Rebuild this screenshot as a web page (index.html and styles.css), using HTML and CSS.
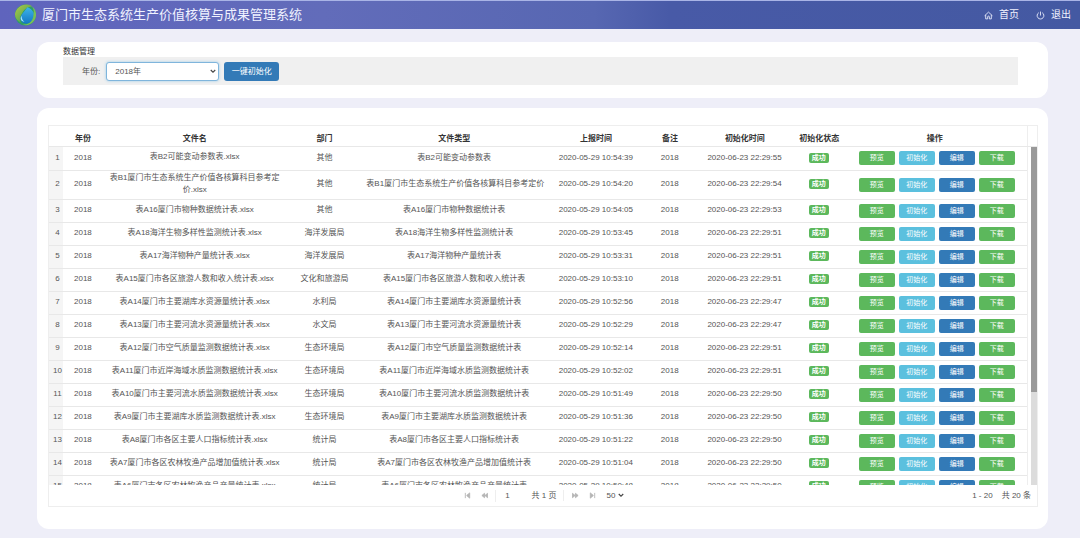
FILE: index.html
```html
<!DOCTYPE html>
<html lang="zh-CN">
<head>
<meta charset="utf-8">
<title>厦门市生态系统生产价值核算与成果管理系统</title>
<link rel="stylesheet" href="styles.css">
</head>
<body>
<header class="topbar">
  <svg class="logo" viewBox="0 0 24 24" aria-hidden="true">
    <defs>
      <linearGradient id="leaf" x1="0" y1="0" x2="1" y2="1"><stop offset="0" stop-color="#b5c84a"/><stop offset="1" stop-color="#2f9a4e"/></linearGradient>
      <linearGradient id="sea" x1="0" y1="0" x2="0" y2="1"><stop offset="0" stop-color="#3db4ea"/><stop offset="1" stop-color="#1277c4"/></linearGradient>
    </defs>
    <circle cx="12" cy="12" r="11" fill="#2d9c6a"/>
    <path d="M1 11C2 5 7 1 13 1c3 0 5 1 6 2-6 0-9 4-11 8-2 3-2 6-1 9C3 18 1 15 1 11z" fill="url(#leaf)"/>
    <path d="M14 4c5 2 8 6 7 11-1 6-9 8-13 4-4-5 2-9 6-15z" fill="url(#sea)"/>
    <path d="M8 13c-2 2-1 6 3 6-2-1-3-3-3-6z" fill="#a9e6f7"/>
    <path d="M19 3c5 4 5 11 2 15-3 4-8 6-12 4 6 0 10-3 11-8s1-8-1-11z" fill="#78bf58"/>
  </svg>
  <h1 class="brand">厦门市生态系统生产价值核算与成果管理系统</h1>
  <nav class="topnav">
    <a href="#home"><svg viewBox="0 0 16 16" aria-hidden="true"><path d="M1 8.500 8 2l7 6.500M3 7v7h3.500v-3.500a1.500 1.500 0 0 1 3 0V14H13V7"/></svg>首页</a>
    <a href="#logout"><svg viewBox="0 0 16 16" aria-hidden="true"><path d="M5 3a6 6 0 1 0 6 0M8 1v7"/></svg>退出</a>
  </nav>
</header>
<main class="page">
  <section class="card filter-card">
    <h2 class="section-title">数据管理</h2>
    <form class="filter-bar">
      <label for="year">年份:</label>
      <span class="select-wrap">
        <select id="year" class="year-select"><option>2018年</option></select>
        <svg class="caret" viewBox="0 0 8 6" aria-hidden="true"><path d="M1 1l3 3 3-3"/></svg>
      </span>
      <button type="button" class="btn btn-main">一键初始化</button>
    </form>
  </section>
  <section class="card grid-card">
    <div class="grid">
      <div class="grid-head">
        <table class="data-table">
          <colgroup class="cols"></colgroup>
          <thead><tr><th></th><th>年份</th><th>文件名</th><th>部门</th><th>文件类型</th><th>上报时间</th><th>备注</th><th>初始化时间</th><th>初始化状态</th><th>操作</th></tr></thead>
        </table>
      </div>
      <div class="grid-body">
        <div class="grid-rows">
          <table class="data-table">
            <colgroup class="cols"></colgroup>
            <tbody id="rows"></tbody>
          </table>
        </div>
        <div class="scroll-track"><div class="scroll-thumb" id="thumb"></div></div>
      </div>
      <footer class="pager">
        <div class="pager-nav">
          <button type="button" aria-label="首页"><svg viewBox="0 0 8 8"><path d="M1.500 1v6M6.500 1 3 4l3.500 3z"/></svg></button>
          <button type="button" aria-label="上一页"><svg viewBox="0 0 8 8"><path d="M4 1.500 1 4l3 2.500zM7.500 1.500l-3 2.500 3 2.500z"/></svg></button>
          <input class="page-input" type="text" value="1" aria-label="页码">
          <span class="page-total">共 1 页</span>
          <button type="button" aria-label="下一页"><svg viewBox="0 0 8 8"><path d="M.5 1.500l3 2.500-3 2.500zM4 1.500 7 4 4 6.500z"/></svg></button>
          <button type="button" aria-label="末页"><svg viewBox="0 0 8 8"><path d="M6.500 1v6M1.500 1 5 4 1.500 7z"/></svg></button>
          <span class="select-wrap">
            <select class="size-select" aria-label="每页条数"><option>50</option></select>
            <svg class="caret" viewBox="0 0 8 6" aria-hidden="true"><path d="M1 1l3 3 3-3"/></svg>
          </span>
        </div>
        <div class="pager-info"><span>1 - 20</span><span>共 20 条</span></div>
      </footer>
    </div>
  </section>
</main>
<script src="app.js"></script>
</body>
</html>
```

FILE: styles.css
```css
* { box-sizing: border-box; }

body {
  margin: 0;
  height: 100vh;
  display: flex;
  flex-direction: column;
  background: #eeeef8;
  color: #555;
  font: 8px/11px "Liberation Sans", "Noto Sans CJK SC", sans-serif;
}

button, input, select { font: inherit; color: inherit; margin: 0; }

.topbar {
  flex: none;
  display: flex;
  align-items: center;
  height: 29px;
  padding: 0 9px 0 14px;
  border-top: 1px solid #a9b4e6;
  background: linear-gradient(90deg, #5f64bd 0%, #626cba 30%, #5767b2 55%, #485aa7 62%, #4459a2 100%);
  color: #f0f2ff;
}
.logo { width: 23px; height: 24px; }
.brand { margin: 0 0 0 5px; font-size: 13px; line-height: 20px; font-weight: 400; }
.topnav { display: flex; gap: 17px; margin-left: auto; }
.topnav a {
  display: flex;
  align-items: center;
  gap: 6px;
  color: inherit;
  font-size: 10px;
  line-height: 14px;
  text-decoration: none;
}
.topnav svg { width: 9px; height: 9px; fill: none; stroke: currentColor; stroke-width: 1.500; }

.page {
  flex: 1;
  min-height: 0;
  display: flex;
  flex-direction: column;
  gap: 10px;
  padding: 13px 32px 9px 37px;
}
.card { background: #fff; border-radius: 12px; }

.filter-card { flex: none; padding: 4px 30px 13px 26px; }
.section-title { margin: 0; font-size: 8px; line-height: 11px; font-weight: 400; color: #333; }
.filter-bar {
  display: flex;
  align-items: center;
  height: 28px;
  padding-left: 19px;
  background: #f0f0f0;
}
.select-wrap { position: relative; display: flex; align-items: center; }
.year-select, .size-select { appearance: none; border: 0; background: transparent; }
.year-select {
  width: 113px;
  height: 19px;
  margin-left: 6px;
  padding: 0 8px;
  border: 1px solid #7fb5dc;
  border-radius: 3px;
  background: #fff;
  box-shadow: 0 0 3px #9ccbe9;
}
.caret {
  position: absolute;
  right: 3px;
  width: 6px;
  height: 5px;
  fill: none;
  stroke: #444;
  stroke-width: 1.500;
  pointer-events: none;
}
.btn {
  padding: 0;
  border: 0;
  border-radius: 2px;
  color: #fff;
  text-align: center;
  white-space: nowrap;
}
.btn-main { width: 55px; height: 19px; margin-left: 5px; background: #337ab7; border-radius: 3px; }

.grid-card { flex: 1; min-height: 0; display: flex; flex-direction: column; padding: 17px 10px 22px 11px; }
.grid {
  flex: 1;
  min-height: 0;
  display: flex;
  flex-direction: column;
  border: 1px solid #eee;
}
.grid-head { flex: none; padding-right: 9px; border-bottom: 1px solid #e8e8e8; }
.data-table { width: 100%; table-layout: fixed; border-collapse: collapse; }
.data-table th, .data-table td { padding: 0 4px; text-align: center; white-space: nowrap; }
.data-table th { height: 20px; padding: 4px 0 0; color: #333; }
.grid-head .data-table { border-right: 1px solid #eee; }
.grid-body { flex: 1; min-height: 0; display: flex; gap: 3px; }
.grid-rows { flex: 1; min-width: 0; overflow-y: scroll; scrollbar-width: none; border-right: 1px solid #eee; }
.data-table td { height: 23px; padding-bottom: 2px; border-bottom: 1px solid #e8e8e8; }
.data-table td.file { padding-top: 1px; padding-bottom: 3px; line-height: 12px; white-space: normal; }
.data-table td.num { padding: 0 0 2px 3px; background: #f5f5f5; }
.data-table td.state { padding-bottom: 1px; }
.data-table td.ops { padding: 0 0 0 4px; }
.badge {
  display: block;
  width: 20px;
  margin: 0 auto;
  border-radius: 2px;
  background: #5cb85c;
  color: #fff;
  font-size: 7px;
  line-height: 10px;
  font-weight: 700;
}
.actions { display: flex; justify-content: center; gap: 4px; }
.actions .btn { width: 36px; height: 14px; font-size: 7px; line-height: 14px; }
.green { background: #5cb85c; }
.cyan { background: #5bc0de; }
.blue { background: #337ab7; }

.scroll-track { flex: none; width: 6px; background: #dcdcdc; }
.scroll-thumb { background: #999; }

.pager {
  flex: none;
  display: grid;
  grid-template-columns: 1fr auto 1fr;
  align-items: center;
  height: 21px;
}
.pager-nav { grid-column: 2; display: flex; align-items: center; }
.pager-nav button { width: 17px; height: 12px; padding: 0; border: 0; background: none; }
.pager-nav button svg { display: block; width: 7px; height: 7px; margin: 0 auto; fill: #b5b5b5; stroke: #b5b5b5; stroke-width: 1; }
.page-input {
  width: 28px;
  height: 12px;
  margin-left: 2px;
  padding: 0 3px 0 0;
  border: 0;
  border-left: 1px solid #eee;
  background: none;
  text-align: center;
}
.page-total { padding: 0 7px 0 9px; margin-right: 3px; border-right: 1px solid #eee; }
.size-select { width: 26px; padding: 0 0 0 5px; }
.pager-nav .caret { right: 3px; }
.pager-info { justify-self: end; display: flex; gap: 9px; padding-right: 6px; }
```

FILE: app.js
```js
const widths = [14, 40, 184, 76, 184, 100, 48, 102, 47, 185];
const total = widths.reduce((a, b) => a + b);
document.querySelectorAll('.cols').forEach(group => {
  group.innerHTML = widths.map(w => `<col style="width:${w / total * 100}%">`).join('');
});

const files = [
  ['表B2可能变动参数表', '其他', '10:54:39', '55'],
  ['表B1厦门市生态系统生产价值各核算科目参考定价', '其他', '10:54:20', '54'],
  ['表A16厦门市物种数据统计表', '其他', '10:54:05', '53'],
  ['表A18海洋生物多样性监测统计表', '海洋发展局', '10:53:45', '51'],
  ['表A17海洋物种产量统计表', '海洋发展局', '10:53:31', '51'],
  ['表A15厦门市各区旅游人数和收入统计表', '文化和旅游局', '10:53:10', '51'],
  ['表A14厦门市主要湖库水资源量统计表', '水利局', '10:52:56', '47'],
  ['表A13厦门市主要河流水资源量统计表', '水文局', '10:52:29', '47'],
  ['表A12厦门市空气质量监测数据统计表', '生态环境局', '10:52:14', '51'],
  ['表A11厦门市近岸海域水质监测数据统计表', '生态环境局', '10:52:02', '51'],
  ['表A10厦门市主要河流水质监测数据统计表', '生态环境局', '10:51:49', '50'],
  ['表A9厦门市主要湖库水质监测数据统计表', '生态环境局', '10:51:36', '50'],
  ['表A8厦门市各区主要人口指标统计表', '统计局', '10:51:22', '50'],
  ['表A7厦门市各区农林牧渔产品增加值统计表', '统计局', '10:51:04', '50'],
  ['表A6厦门市各区农林牧渔产品产量统计表', '统计局', '10:50:48', '50'],
  ['表A5厦门市土地利用统计表', '统计局', '10:50:31', '50'],
  ['表A4厦门市森林资源统计表', '统计局', '10:50:15', '50'],
  ['表A3厦门市湿地资源统计表', '统计局', '10:50:02', '50'],
  ['表A2厦门市气象数据统计表', '统计局', '10:49:46', '50'],
  ['表A1厦门市基础数据统计表', '统计局', '10:49:30', '50']
];

document.getElementById('rows').innerHTML = files.map(([name, dept, time, sec], i) => `
  <tr><td class="num">${i + 1}</td><td>2018</td><td class="file">${name}.xlsx</td><td>${dept}</td><td>${name}</td>
  <td>2020-05-29 ${time}</td><td>2018</td><td>2020-06-23 22:29:${sec}</td>
  <td class="state"><span class="badge">成功</span></td>
  <td class="ops"><div class="actions"><button type="button" class="btn green">预览</button><button type="button" class="btn cyan">初始化</button><button type="button" class="btn blue">编辑</button><button type="button" class="btn green">下载</button></div></td></tr>`).join('');

const pane = document.querySelector('.grid-rows');
const thumb = document.getElementById('thumb');
function syncThumb() {
  thumb.style.height = `${pane.clientHeight / pane.scrollHeight * 100}%`;
  thumb.style.marginTop = `${pane.scrollTop / pane.scrollHeight * pane.clientHeight}px`;
}
pane.addEventListener('scroll', syncThumb);
window.addEventListener('resize', syncThumb);
syncThumb();
```
